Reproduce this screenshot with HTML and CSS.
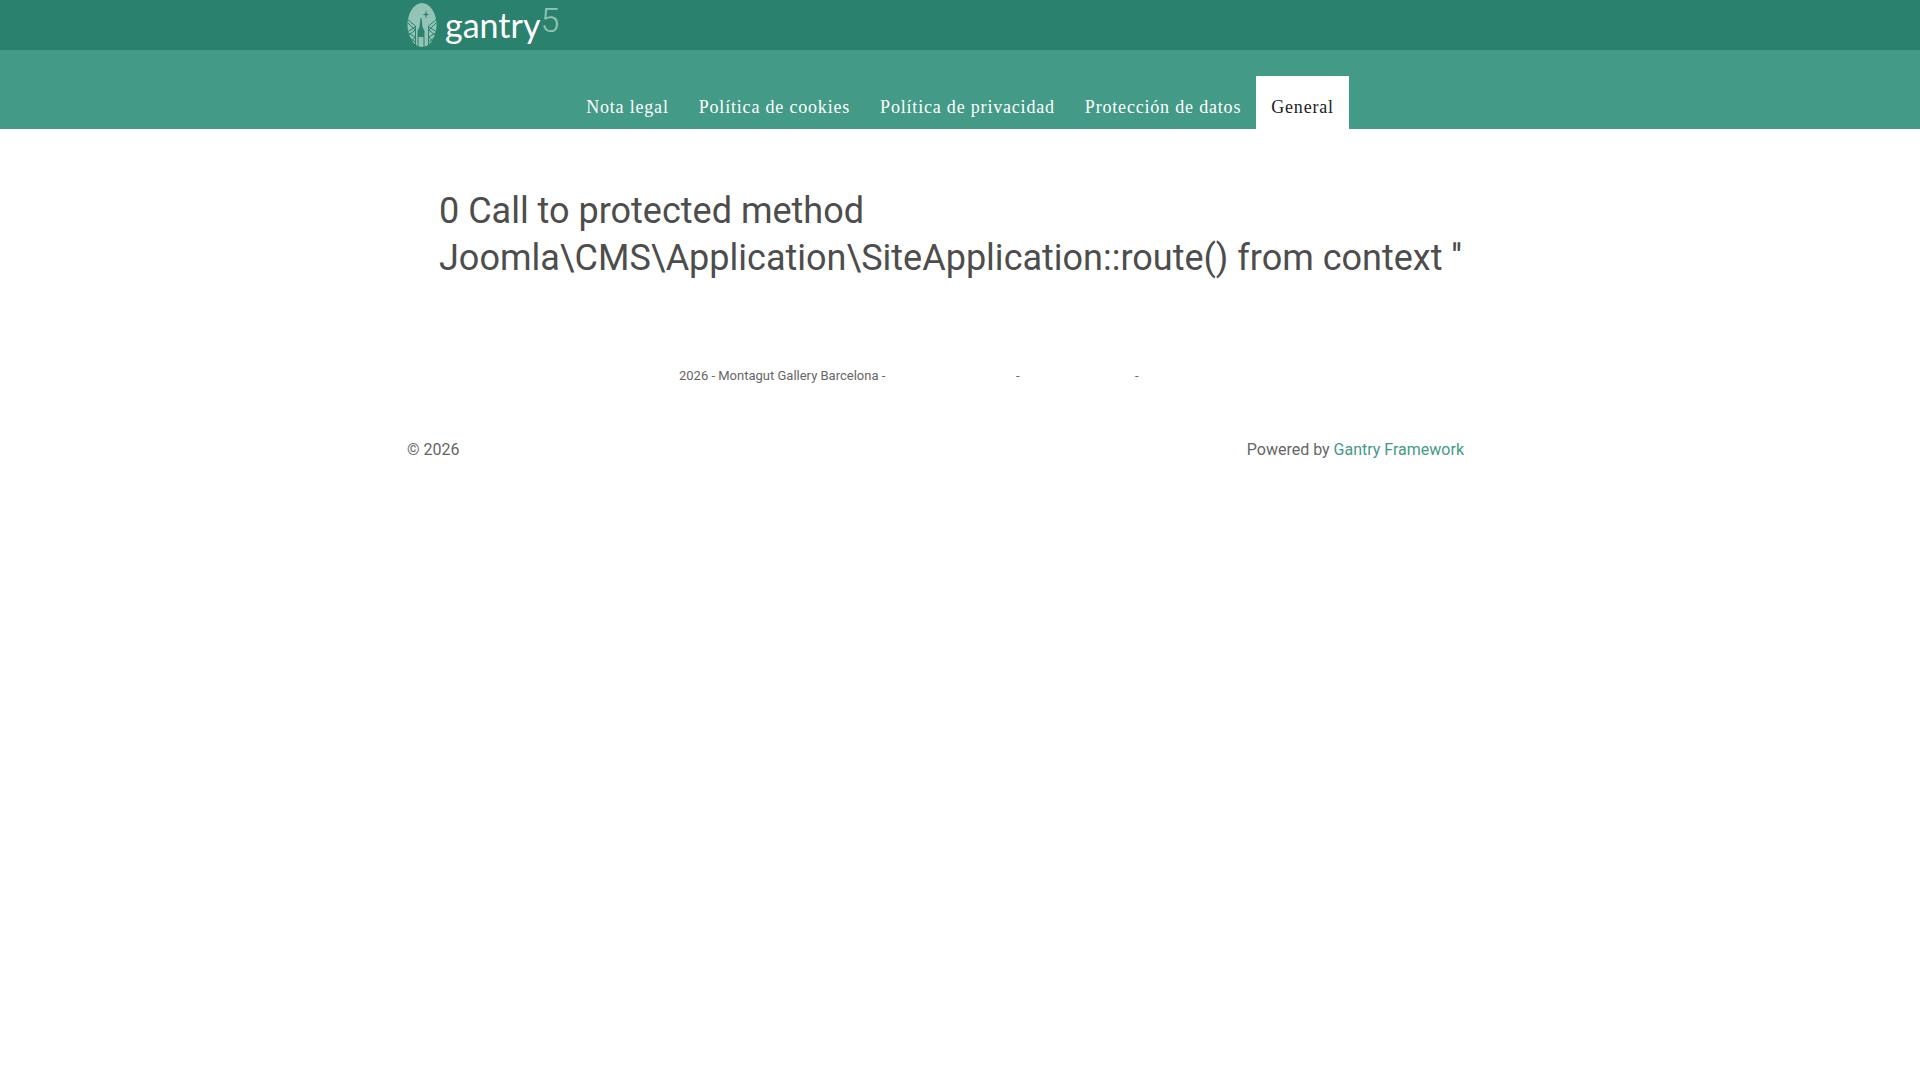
FILE: index.html
```html
<!DOCTYPE html>
<html lang="es">
<head>
<meta charset="utf-8">
<meta name="viewport" content="width=device-width, initial-scale=1">
<title>Montagut Gallery Barcelona</title>
<link rel="stylesheet" href="styles.css">
</head>
<body>
<header class="header">
  <div class="container">
    <a class="logo" href="#" aria-label="Gantry 5">
      <svg class="logo-mark" viewBox="0 0 30 50" aria-hidden="true">
        <ellipse cx="15" cy="25" rx="14.500" ry="22" fill="#93c4b6"/>
        <g fill="none" stroke="#2a816d" stroke-width="1">
          <path d="M0 19 8.500 26V46M30 19 21.500 26V46"/>
          <path d="M1 23 8 30 1 36 8 42M8 27 0 32 8 37 4 42M29 23 22 30 29 36 22 42M22 27 30 32 22 37 26 42"/>
        </g>
        <path fill="#2a816d" d="M13.500 18h1l1 9 2 4v17h-1V37h-5v11h-1V31l2-4z"/>
        <path fill="#2a816d" d="m19 10 .8 3.700 2.700.8-2.700.8L19 19l-.8-3.700-2.700-.8 2.700-.8z"/>
      </svg>
      <span class="logo-name">gantry</span><span class="logo-version">5</span>
    </a>
  </div>
</header>
<nav class="navigation" aria-label="Principal">
  <ul class="menu">
    <li><a class="menu-link" href="#">Nota legal</a></li>
    <li><a class="menu-link" href="#">Política de cookies</a></li>
    <li><a class="menu-link" href="#">Política de privacidad</a></li>
    <li><a class="menu-link" href="#">Protección de datos</a></li>
    <li><a class="menu-link active" href="#" aria-current="page">General</a></li>
  </ul>
</nav>
<main class="container main">
  <h1 class="title">0 Call to protected method Joomla\CMS\Application\SiteApplication::route() from context ''</h1>
</main>
<footer class="container">
  <div class="legal">
    <span>2026 - Montagut Gallery Barcelona -</span>
    <span>-</span>
    <span>-</span>
  </div>
  <div class="bottom">
    <div>© 2026</div>
    <div>Powered by <a class="link" href="#">Gantry Framework</a></div>
  </div>
</footer>
</body>
</html>
```
FILE: styles.css
```css
* { box-sizing: border-box; }

body {
  margin: 0;
  background: #fff;
  color: #666;
  font: 16px/24px Roboto, sans-serif;
}

.container {
  max-width: 1106px;
  margin: 0 auto;
}

.header { background: #2a816d; }

.logo {
  display: inline-flex;
  height: 50px;
  color: #fff;
  font-family: Lato, sans-serif;
  text-decoration: none;
  vertical-align: top;
}

.logo-mark {
  width: 30px;
  height: 50px;
  margin-right: 8px;
}

.logo-name {
  font-size: 34px;
  line-height: 50px;
}

.logo-version {
  color: #93c4b6;
  font-family: Roboto, sans-serif;
  font-size: 34px;
  font-weight: 300;
  line-height: 40px;
}

.navigation {
  padding-top: 26px;
  background: #439a86;
}

.menu {
  display: flex;
  flex-wrap: wrap;
  justify-content: center;
  margin: 0;
  padding: 0;
  list-style: none;
}

.menu-link {
  display: block;
  padding: 19px 15px 10px;
  color: #fff;
  font-family: "Liberation Serif", serif;
  font-size: 18px;
  letter-spacing: 0.045em;
  text-decoration: none;
}

.menu-link.active {
  background: #fff;
  color: #222;
}

.main { padding: 59px 32px 0; }

.title {
  margin: 0;
  color: #4d4d4d;
  font-size: 36px;
  font-weight: 400;
  line-height: 47px;
}

.legal {
  display: grid;
  grid-template-columns: 337px 119px auto;
  padding: 82px 0 0 272px;
  font-size: 13px;
}

.bottom {
  display: flex;
  justify-content: space-between;
  padding: 50px 49px 48px 0;
}

.link {
  color: #439a86;
  text-decoration: none;
}
```
